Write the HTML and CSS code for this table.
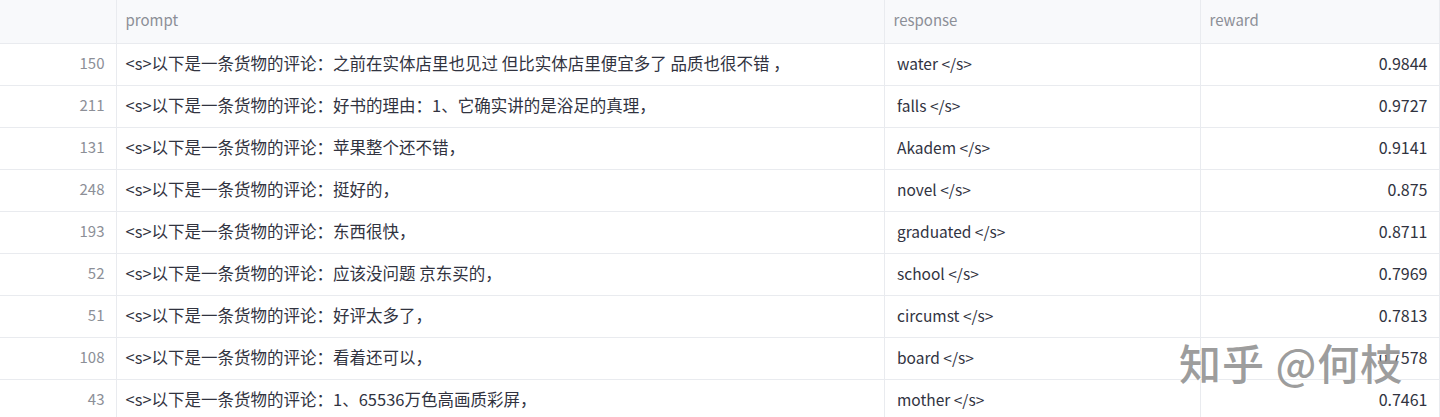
FILE: index.html
```html
<!DOCTYPE html>
<html lang="zh">
<head>
<meta charset="utf-8">
<link rel="stylesheet" href="styles.css">
</head>
<body>
<div class="wrap">
<table class="grid">
<colgroup><col class="c-idx"><col class="c-prompt"><col class="c-resp"><col class="c-rew"></colgroup>
<thead><tr><th></th><th>prompt</th><th>response</th><th>reward</th></tr></thead>
<tbody>
<tr><td class="idx">150</td><td class="cn">&lt;s&gt;以下是一条货物的评论：之前在实体店里也见过 但比实体店里便宜多了 品质也很不错 ，</td><td class="resp"> water &lt;/s&gt;</td><td class="num">0.9844</td></tr>
<tr><td class="idx">211</td><td class="cn">&lt;s&gt;以下是一条货物的评论：好书的理由：1、它确实讲的是浴足的真理，</td><td class="resp"> falls &lt;/s&gt;</td><td class="num">0.9727</td></tr>
<tr><td class="idx">131</td><td class="cn">&lt;s&gt;以下是一条货物的评论：苹果整个还不错，</td><td class="resp"> Akadem &lt;/s&gt;</td><td class="num">0.9141</td></tr>
<tr><td class="idx">248</td><td class="cn">&lt;s&gt;以下是一条货物的评论：挺好的，</td><td class="resp"> novel &lt;/s&gt;</td><td class="num">0.875</td></tr>
<tr><td class="idx">193</td><td class="cn">&lt;s&gt;以下是一条货物的评论：东西很快，</td><td class="resp"> graduated &lt;/s&gt;</td><td class="num">0.8711</td></tr>
<tr><td class="idx">52</td><td class="cn">&lt;s&gt;以下是一条货物的评论：应该没问题 京东买的，</td><td class="resp"> school &lt;/s&gt;</td><td class="num">0.7969</td></tr>
<tr><td class="idx">51</td><td class="cn">&lt;s&gt;以下是一条货物的评论：好评太多了，</td><td class="resp"> circumst &lt;/s&gt;</td><td class="num">0.7813</td></tr>
<tr><td class="idx">108</td><td class="cn">&lt;s&gt;以下是一条货物的评论：看着还可以，</td><td class="resp"> board &lt;/s&gt;</td><td class="num">0.7578</td></tr>
<tr><td class="idx">43</td><td class="cn">&lt;s&gt;以下是一条货物的评论：1、65536万色高画质彩屏，</td><td class="resp"> mother &lt;/s&gt;</td><td class="num">0.7461</td></tr>
</tbody>
</table>
<div class="watermark">知乎 @何枝</div>
</div>
</body>
</html>
```
FILE: styles.css
```css
html, body {
  margin: 0;
  padding: 0;
  background: #fff;
  overflow: hidden;
}
.wrap {
  position: relative;
  width: 1440px;
  height: 417px;
  overflow: hidden;
}
.grid {
  border-collapse: collapse;
  table-layout: fixed;
  width: 1439px;
  font-family: "Noto Sans CJK SC", "Noto Sans", sans-serif;
  font-size: 16px;
  color: #31333f;
}
.c-idx { width: 116px; }
.c-prompt { width: 768px; }
.c-resp { width: 316px; }
.c-rew { width: 239px; }
.grid th, .grid td {
  border: 1px solid #e9ebef;
  height: 42px;
  padding: 0 9px 3px;
  box-sizing: border-box;
  white-space: pre;
  overflow: hidden;
  text-align: left;
  vertical-align: middle;
}
.grid tr:first-child th { border-top: none; }
.grid tr > :first-child { border-left: none; }
.grid th {
  background: #f8f9fb;
  color: #8c8f97;
  font-weight: 400;
  font-size: 15px;
  height: 43px;
}
.grid td.cn {
  font-size: 16.5px;
}
.grid td.resp {
  font-size: 15.5px;
}
.grid td.idx {
  text-align: right;
  color: #8c8f97;
  font-size: 15px;
  padding-right: 11px;
}
.grid td.num {
  text-align: right;
  padding-right: 11px;
}
.watermark {
  position: absolute;
  left: 1179px;
  top: 331px;
  font-family: "Noto Sans CJK SC", sans-serif;
  font-size: 42px;
  font-weight: 500;
  letter-spacing: 1px;
  color: rgba(140, 140, 140, 0.85);
  text-shadow: 1px 1px 0 rgba(255,255,255,0.9);
  pointer-events: none;
}
```
